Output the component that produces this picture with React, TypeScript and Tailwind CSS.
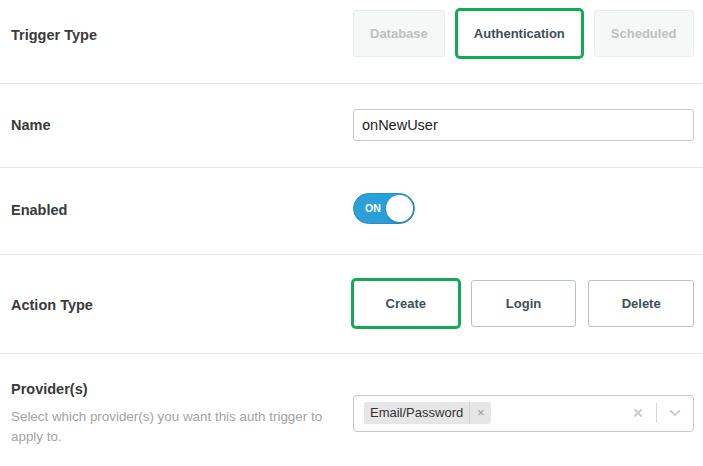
import { useState } from "react"

const font = "font-['Helvetica_Neue','Liberation_Sans',Arial,sans-serif]"

function Row({ label, children, className = "" }: { label: React.ReactNode; children: React.ReactNode; className?: string }) {
  return (
    <div className={`flex items-center border-b border-[#e7e7e7] pl-[11px] pr-[9px] ${className}`}>
      <div className="w-[342px] shrink-0">{label}</div>
      <div className="flex-1">{children}</div>
    </div>
  )
}

const labelCls = "text-[14.5px] font-bold text-[#3a3a3a] leading-5"

export default function App() {
  const [enabled, setEnabled] = useState(true)
  const [action, setAction] = useState("Create")

  return (
    <main className={`w-[703px] min-h-[466px] bg-white ${font}`}>
      {/* Trigger type */}
      <Row label={<p className={`${labelCls} mt-[2px]`}>Trigger Type</p>} className="pt-[10px] pb-[26px]">
        <div className="flex gap-3">
          <button className="h-[47px] px-4 rounded-[3px] border border-[#e7eeec] bg-[#f6f8f7] text-[13px] font-bold text-[#b8c4c2]">
            Database
          </button>
          <button className="h-[47px] px-4 rounded-[3px] border border-[#13aa52] shadow-[0_0_0_2px_#13aa52] bg-white text-[13px] font-bold text-[#3d4f58]">
            Authentication
          </button>
          <button className="h-[47px] px-4 rounded-[3px] border border-[#e7eeec] bg-[#f6f8f7] text-[13px] font-bold text-[#b8c4c2]">
            Scheduled
          </button>
        </div>
      </Row>

      {/* Name */}
      <Row label={<p className={labelCls}>Name</p>} className="pt-[25px] pb-[26px]">
        <input
          defaultValue="onNewUser"
          className="w-full h-[32px] rounded-[3px] border border-[#c8c8c8] px-[8px] text-[14.5px] text-[#222] focus:outline-none"
        />
      </Row>

      {/* Enabled */}
      <Row label={<p className={`${labelCls} mt-[3px]`}>Enabled</p>} className="pt-[25px] pb-[30px]">
        <button
          onClick={() => setEnabled(!enabled)}
          className="relative w-[62px] h-[31px] rounded-full bg-[#2a9fd8] border border-[#2590c8] flex items-center"
        >
          <span className="pl-[11px] text-[10.5px] font-bold text-white">ON</span>
          <span className="absolute right-[1px] top-[1px] w-[27px] h-[27px] rounded-full bg-white shadow-[0_1px_2px_rgba(0,0,0,0.25)]" />
        </button>
      </Row>

      {/* Action type */}
      <Row label={<p className={`${labelCls} mt-[2px]`}>Action Type</p>} className="pt-[25px] pb-[26px]">
        <div className="flex gap-3">
          {["Create", "Login", "Delete"].map((a) => (
            <button
              key={a}
              onClick={() => setAction(a)}
              className={
                a === action
                  ? "flex-1 h-[47px] rounded-[3px] border border-[#13aa52] shadow-[0_0_0_2px_#13aa52] bg-white text-[13px] font-bold text-[#3d4f58]"
                  : "flex-1 h-[47px] rounded-[3px] border border-[#b8c4c2] bg-white text-[13px] font-bold text-[#3d4f58]"
              }
            >
              {a}
            </button>
          ))}
        </div>
      </Row>

      {/* Providers */}
      <div className="flex items-center pl-[11px] pr-[9px] pt-[25px] pb-[20px]">
        <div className="w-[342px] shrink-0">
          <p className={labelCls}>Provider(s)</p>
          <p className="mt-[8px] max-w-[325px] text-[13.4px] leading-5 text-[#a3a3a3]">
            Select which provider(s) you want this auth trigger to apply to.
          </p>
        </div>
        <div className="flex-1 h-[37px] rounded-[4px] border border-[#c6c6c6] flex items-center pl-[10px]">
          <div className="flex items-center h-[22px] bg-[#e6e6e6] rounded-[2px]">
            <span className="px-[6px] text-[13px] text-[#333]">Email/Password</span>
            <span className="h-full w-[22px] border-l border-[#d4d4d4] flex items-center justify-center text-[13px] text-[#999]">
              ×
            </span>
          </div>
          <div className="flex-1" />
          <svg width="10" height="10" viewBox="0 0 10 10" className="mr-[13px]">
            <path d="M1.5 1.5 L8.5 8.5 M8.5 1.5 L1.5 8.5" stroke="#cccccc" strokeWidth="2" />
          </svg>
          <div className="w-px h-[20px] bg-[#d6d6d6]" />
          <svg width="12" height="8" viewBox="0 0 12 8" className="mx-[12px]">
            <path d="M1 1.5 L6 6 L11 1.5" stroke="#cccccc" strokeWidth="1.8" fill="none" />
          </svg>
        </div>
      </div>
    </main>
  )
}
